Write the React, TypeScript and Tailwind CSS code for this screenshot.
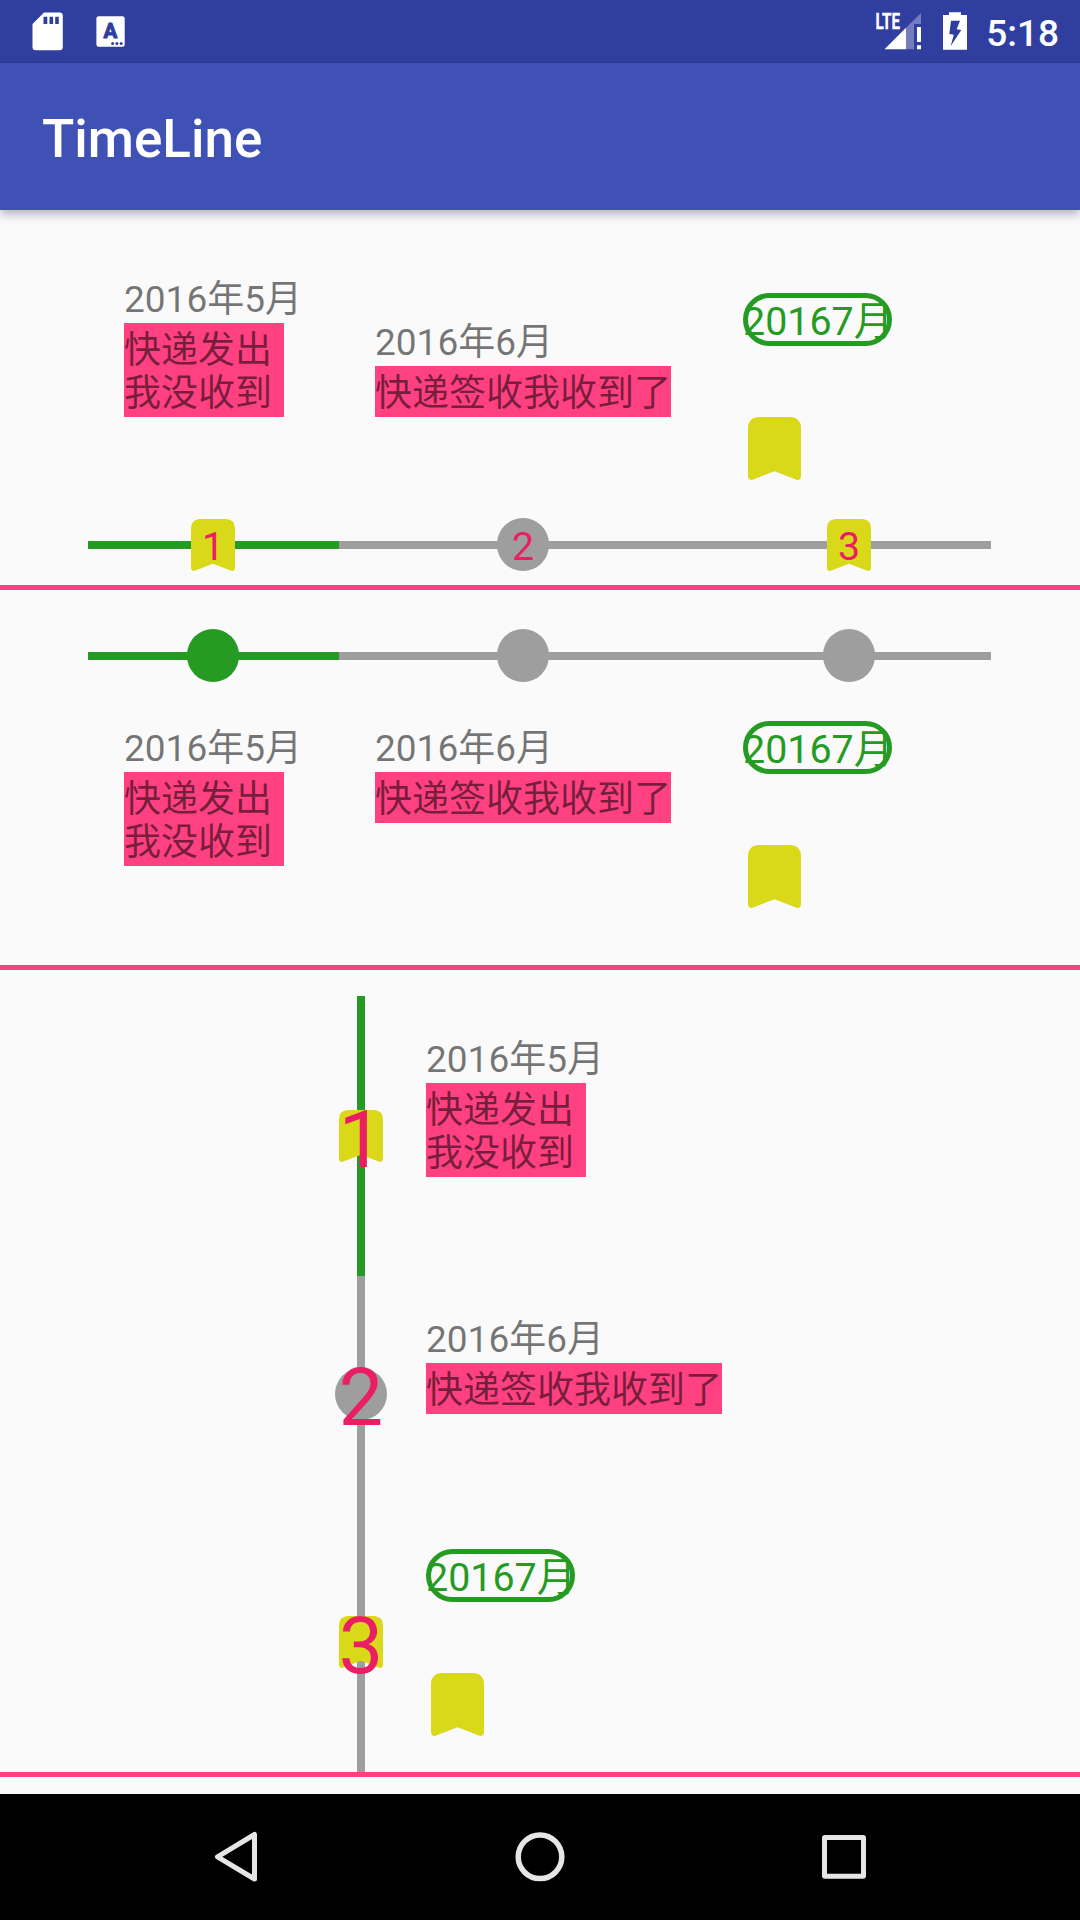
import type { ReactNode } from 'react';

function StatusBar() {
  return (
    <div className="flex h-[63px] shrink-0 items-start justify-between bg-[#303f9f] text-white">
      <svg className="h-[63px] w-[140px]" viewBox="0 0 140 63" fill="currentColor">
        <path
          fillRule="evenodd"
          d="M44 12.5H59.5a3.3 3.3 0 0 1 3.3 3.3V47a3.3 3.3 0 0 1-3.3 3.3H35.8a3.3 3.3 0 0 1-3.3-3.3V24ZM43.5 16.8v7.2h3.8v-7.2ZM49.5 16.8v7.2h3.6v-7.2ZM55.2 16.8v7.2h3.6v-7.2Z"
        />
        <rect x="96.4" y="16.3" width="28.3" height="30.4" rx="2.3" />
        <text
          x="110.5"
          y="38.3"
          textAnchor="middle"
          fontFamily="Roboto, sans-serif"
          fontSize="20.5"
          fontWeight="700"
          fill="#303f9f"
          stroke="#303f9f"
          strokeWidth="1"
          strokeLinejoin="round"
        >
          A
        </text>
        <g fill="#303f9f">
          <circle cx="112.6" cy="43.5" r="1.5" />
          <circle cx="116.9" cy="43.5" r="1.5" />
          <circle cx="121.2" cy="43.5" r="1.5" />
        </g>
      </svg>
      <div className="flex pr-[21px]">
        <svg className="mr-px h-[63px] w-[115px]" viewBox="870 0 115 63" fill="currentColor">
          <text
            x="875.5"
            y="29"
            fontFamily="Roboto, sans-serif"
            fontSize="22"
            fontWeight="700"
            textLength="24.5"
            lengthAdjust="spacingAndGlyphs"
            stroke="currentColor"
            strokeWidth="0.3"
          >
            LTE
          </text>
          <path d="M884.5 49.3 906 27.8V49.3Z" />
          <path d="M906 27.8 921 13V24H914V49.3H906Z" opacity="0.32" />
          <path d="M917 27h4v15h-4ZM917 45.3h4v4h-4Z" />
          <path
            fillRule="evenodd"
            d="M949 12.3H961V15H967V49.7H943V15H949ZM951 20.8 949.3 34 953.8 34.8 950.6 46.2 961.3 30 956.7 29.2 960 20.8Z"
          />
        </svg>
        <span className="pt-[11.500px] text-[37px] leading-[44px] font-medium">5:18</span>
      </div>
    </div>
  );
}

function Bookmark({ className }: { className: string }) {
  return (
    <svg className={className} viewBox="0 0 53 63" preserveAspectRatio="none" fill="#dad919">
      <path d="M10 0H43Q53 1 53 11V59.500Q52.500 63.500 48.500 62.800L26.500 54.200 4.500 62.800Q.5 63.500 0 59.500V11Q0 1 10 0Z" />
    </svg>
  );
}

function Dot({ green = false }: { green?: boolean }) {
  return (
    <span
      className={
        green
          ? 'block size-[52.5px] rounded-full bg-[#259b24]'
          : 'block size-[52.5px] rounded-full bg-[#9e9e9e]'
      }
    />
  );
}

function Marker({ children, label, big = false }: { children: ReactNode; label?: string; big?: boolean }) {
  return (
    <div className="grid h-[53px] w-[53px] grid-rows-[53px] place-items-center">
      <div className="col-start-1 row-start-1">{children}</div>
      {label && (
        <span
          className={
            big
              ? 'col-start-1 row-start-1 pt-[8px] text-[79px] leading-[53px] text-[#e91e63]'
              : 'col-start-1 row-start-1 pt-[4px] text-[39.400px] leading-[53px] text-[#e91e63]'
          }
        >
          {label}
        </span>
      )}
    </div>
  );
}

function Entry({ date, lines, wide = false }: { date: string; lines: string[]; wide?: boolean }) {
  return (
    <div className="flex flex-col items-start gap-[2px] text-[37px] leading-[43px] whitespace-nowrap text-black/54">
      <span>{date}</span>
      <div
        className={
          wide
            ? 'flex w-[296px] flex-col bg-[#ff4081] pt-[6px] pb-[2px]'
            : 'flex w-[160px] flex-col bg-[#ff4081] pt-[6px] pb-[2px]'
        }
      >
        {lines.map((l) => (
          <span key={l}>{l}</span>
        ))}
      </div>
    </div>
  );
}

function PillEntry() {
  return (
    <div className="flex flex-col items-start gap-[71px]">
      <div className="h-[53px] w-[149px] rounded-full border-[5px] border-[#259b24] text-[39.400px] text-[#259b24]">
        <span className="-ml-[5px] block leading-[48px] whitespace-nowrap">20167月</span>
      </div>
      <Bookmark className="ml-[5px] h-[63px] w-[53px]" />
    </div>
  );
}

function HorizontalAxis({ markers }: { markers: ReactNode[] }) {
  return (
    <div className="grid h-[53px] grid-rows-[53px] items-center">
      <div className="col-start-1 row-start-1 ml-[88px] flex h-[8px]">
        <div className="w-[251px] bg-[#259b24]" />
        <div className="w-[652px] bg-[#9e9e9e]" />
      </div>
      <div className="col-start-1 row-start-1 flex pl-[186.500px]">
        <div className="w-[310px]">{markers[0]}</div>
        <div className="w-[326px]">{markers[1]}</div>
        <div>{markers[2]}</div>
      </div>
    </div>
  );
}

function HorizontalEntries({ bottom = false }: { bottom?: boolean }) {
  return (
    <div className="flex items-start pl-[124px]">
      <div className={bottom ? 'w-[251px] pt-[6px]' : 'w-[251px]'}>
        <Entry date="2016年5月" lines={['快递发出', '我没收到']} />
      </div>
      <div className={bottom ? 'w-[368px] pt-[6px]' : 'w-[368px] pt-[43px]'}>
        <Entry date="2016年6月" lines={['快递签收我收到了']} wide />
      </div>
      <div className={bottom ? '' : 'pt-[15px]'}>
        <PillEntry />
      </div>
    </div>
  );
}

const Divider = () => <div className="h-[5px] shrink-0 bg-[#ff4081]" />;

export default function App() {
  return (
    <div className="flex h-[1920px] w-[1080px] flex-col overflow-hidden bg-[#fafafa] font-[Roboto,'Noto_Sans_CJK_SC',sans-serif]">
      <StatusBar />
      <header className="flex h-[147px] shrink-0 items-center bg-[#3f51b5] pl-[42px] shadow-[0_4px_10px_rgba(0,0,0,0.3)]">
        <h1 className="pt-[5px] text-[53px] leading-[62px] font-medium text-white">TimeLine</h1>
      </header>

      <section className="flex h-[375px] shrink-0 flex-col pt-[68px]">
        <div className="h-[240px]">
          <HorizontalEntries />
        </div>
        <HorizontalAxis
          markers={[
            <Marker label="1"><Bookmark className="h-[52px] w-[44px]" /></Marker>,
            <Marker label="2"><Dot /></Marker>,
            <Marker label="3"><Bookmark className="h-[52px] w-[44px]" /></Marker>,
          ]}
        />
      </section>
      <Divider />

      <section className="flex h-[375px] shrink-0 flex-col gap-[39px] pt-[39px]">
        <HorizontalAxis
          markers={[
            <Marker><Dot green /></Marker>,
            <Marker><Dot /></Marker>,
            <Marker><Dot /></Marker>,
          ]}
        />
        <HorizontalEntries bottom />
      </section>
      <Divider />

      <section className="flex h-[802px] shrink-0 pt-[26px] pl-[334.500px]">
        <div className="grid w-[53px]">
          <div className="col-start-1 row-start-1 flex w-[8px] flex-col justify-self-center">
            <div className="h-[280px] bg-[#259b24]" />
            <div className="h-[496px] bg-[#9e9e9e]" />
          </div>
          <div className="col-start-1 row-start-1 flex flex-col pt-[113.500px]">
            <div className="h-[258px]">
              <Marker label="1" big><Bookmark className="h-[52px] w-[44px]" /></Marker>
            </div>
            <div className="h-[248px]">
              <Marker label="2" big><Dot /></Marker>
            </div>
            <Marker label="3" big><Bookmark className="h-[52px] w-[44px]" /></Marker>
          </div>
        </div>
        <div className="flex flex-col pt-[42px] pl-[38.500px]">
          <div className="h-[280px]">
            <Entry date="2016年5月" lines={['快递发出', '我没收到']} />
          </div>
          <div className="h-[231px]">
            <Entry date="2016年6月" lines={['快递签收我收到了']} wide />
          </div>
          <PillEntry />
        </div>
      </section>
      <Divider />

      <nav className="mt-[17px] flex h-[126px] shrink-0 items-center justify-center bg-black">
        <svg className="h-[126px] w-[720px]" viewBox="180 1794 720 126" fill="none" stroke="#e6e6e6" strokeLinejoin="round">
          <path d="M254.500 1834.500V1879L217.500 1856.800Z" strokeWidth="5" />
          <circle cx="540" cy="1856.800" r="21.800" strokeWidth="5.500" />
          <rect x="824.500" y="1837.500" width="39" height="38.800" rx="0.500" strokeWidth="5" />
        </svg>
      </nav>
    </div>
  );
}
